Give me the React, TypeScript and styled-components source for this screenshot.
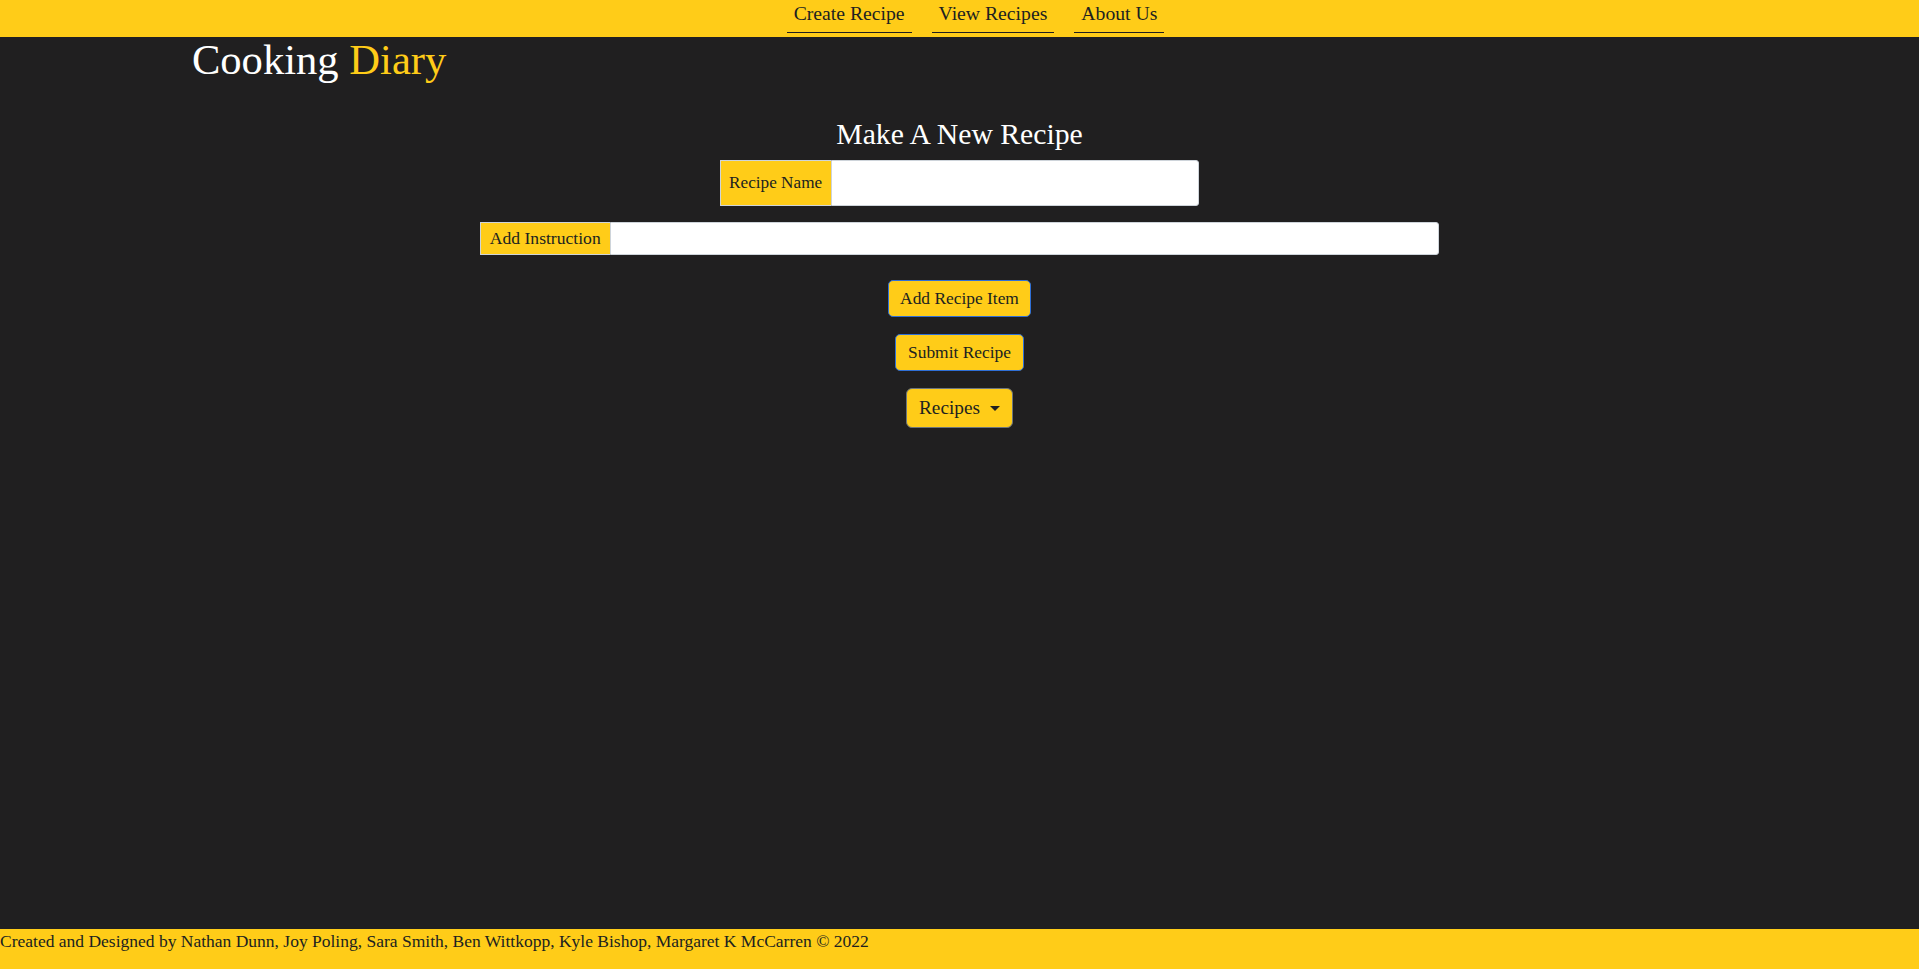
import React from "react";
import styled, { createGlobalStyle } from "styled-components";

const YELLOW = "#ffcc18";
const DARK = "#201f20";
const FONT = `"Liberation Serif", Georgia, "Times New Roman", serif`;

const Global = createGlobalStyle`
  html, body { margin: 0; padding: 0; background: ${DARK}; }
  body { font-family: ${FONT}; }
  * { box-sizing: border-box; }
`;

const Page = styled.div`
  min-height: 100vh;
  display: flex;
  flex-direction: column;
  background: ${DARK};
`;

const NavBar = styled.nav`
  height: 37px;
  background: ${YELLOW};
  display: flex;
  justify-content: center;
  align-items: flex-start;
  gap: 20px;
  padding-left: 32px;
`;

const NavLink = styled.a`
  display: block;
  padding: 1px 7px 7px;
  line-height: 24px;
  font-size: 19.7px;
  color: ${DARK};
  text-decoration: none;
  border-bottom: 1px solid ${DARK};
  cursor: pointer;
`;

const Brand = styled.h1`
  margin: 2px 0 0 10%;
  font-size: 42.6px;
  line-height: 1;
  font-weight: 400;
  color: #fff;
`;

const BrandAccent = styled.span`
  color: ${YELLOW};
`;

const Main = styled.main`
  display: flex;
  flex-direction: column;
  align-items: center;
  margin-top: 35px;
`;

const Heading = styled.h3`
  margin: 0;
  font-size: 29.7px;
  line-height: 1.17;
  font-weight: 400;
  color: #fff;
`;

const InputGroup = styled.div<{ $w: string; $h: number; $mt: number }>`
  display: flex;
  width: ${(p) => p.$w};
  height: ${(p) => p.$h}px;
  margin-top: ${(p) => p.$mt}px;
`;

const GroupLabel = styled.label<{ $w: number; $fs: number }>`
  flex: 0 0 ${(p) => p.$w}px;
  display: flex;
  align-items: center;
  justify-content: center;
  background: ${YELLOW};
  color: ${DARK};
  font-size: ${(p) => p.$fs}px;
  border: 1px solid #ced4da;
  border-right: none;
  white-space: nowrap;
`;

const TextInput = styled.input`
  flex: 1;
  min-width: 0;
  border: 1px solid #ced4da;
  border-radius: 0 3px 3px 0;
  background: #fff;
  font-family: ${FONT};
  font-size: 16px;
  padding: 0 12px;
  outline: none;
`;

const Button = styled.button<{ $w: number; $mt: number }>`
  width: ${(p) => p.$w}px;
  height: 37px;
  margin-top: ${(p) => p.$mt}px;
  background: ${YELLOW};
  color: ${DARK};
  border: 1px solid #2f6fd6;
  border-radius: 5px;
  font-family: ${FONT};
  font-size: 17.4px;
  padding: 0;
  cursor: pointer;
`;

const DropButton = styled.button`
  width: 107px;
  height: 40px;
  margin-top: 17px;
  background: ${YELLOW};
  color: ${DARK};
  border: 1px solid #6c757d;
  border-radius: 6px;
  font-family: ${FONT};
  font-size: 19.3px;
  display: flex;
  align-items: center;
  justify-content: center;
  gap: 10px;
  padding: 0;
  cursor: pointer;
`;

const Caret = styled.span`
  display: inline-block;
  width: 0;
  height: 0;
  border-top: 5.5px solid ${DARK};
  border-left: 5.5px solid transparent;
  border-right: 5.5px solid transparent;
  margin-top: 1px;
`;

const Footer = styled.footer`
  margin-top: auto;
  height: 40px;
  background: ${YELLOW};
  color: ${DARK};
  font-size: 17.5px;
  line-height: 1.45;
`;

export default function App() {
  return (
    <Page>
      <Global />
      <NavBar>
        <NavLink>Create Recipe</NavLink>
        <NavLink>View Recipes</NavLink>
        <NavLink>About Us</NavLink>
      </NavBar>
      <Brand>
        Cooking <BrandAccent>Diary</BrandAccent>
      </Brand>
      <Main>
        <Heading>Make A New Recipe</Heading>
        <InputGroup $w="25%" $h={46} $mt={9}>
          <GroupLabel $w={111} $fs={17.2}>Recipe Name</GroupLabel>
          <TextInput type="text" />
        </InputGroup>
        <InputGroup $w="50%" $h={33} $mt={16}>
          <GroupLabel $w={130} $fs={17.6}>Add Instruction</GroupLabel>
          <TextInput type="text" />
        </InputGroup>
        <Button $w={143} $mt={25}>Add Recipe Item</Button>
        <Button $w={129} $mt={17}>Submit Recipe</Button>
        <DropButton>
          Recipes <Caret />
        </DropButton>
      </Main>
      <Footer>
        Created and Designed by Nathan Dunn, Joy Poling, Sara Smith, Ben Wittkopp, Kyle Bishop, Margaret K McCarren © 2022
      </Footer>
    </Page>
  );
}
